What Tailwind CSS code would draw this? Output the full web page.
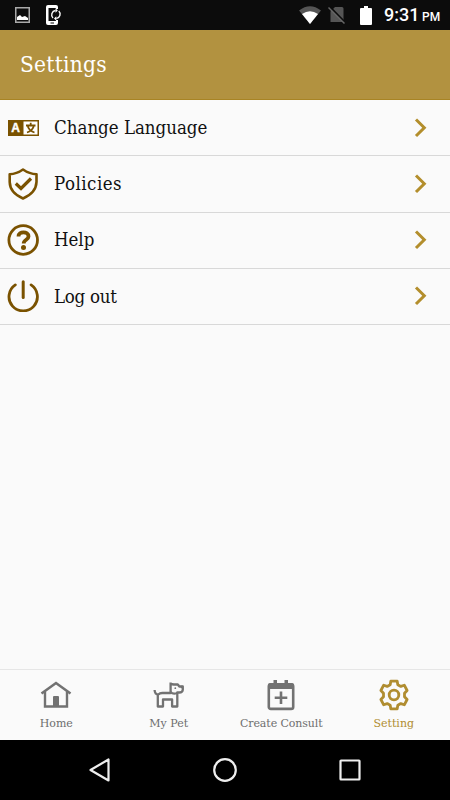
<!DOCTYPE html>
<html lang="en">
<head>
    <meta charset="UTF-8">
    <meta name="viewport" content="width=device-width, initial-scale=1.0">
    <title>Settings</title>
    <script src="https://cdn.jsdelivr.net/npm/@tailwindcss/browser@4"></script>
</head>
<body class="bg-black">
    <div class="flex flex-col w-[450px] h-[800px] overflow-hidden bg-[#fafafa] font-['Roboto_Slab','DejaVu_Serif',serif]">
        <!-- Status Bar -->
        <div class="h-[30px] shrink-0 bg-[#0c0c0c] text-white flex items-center justify-between pl-[15px] pr-[10px]">
            <div class="flex items-center gap-[15px]">
                <svg class="w-[15px] h-4" viewBox="0 0 15 16" fill="none">
                    <rect x="0.75" y="0.75" width="13.5" height="14.5" stroke="#aaa" stroke-width="1.5"/>
                    <path d="M2 13V10l3-2 2 2 3-1 3 2v2z" fill="#fff"/>
                </svg>
                <svg class="w-[18px] h-5" viewBox="0 0 18 20">
                    <path d="M3 0h8a2 2 0 0 1 2 2v2h-2V3H3.500v13H11v-1h2v3a2 2 0 0 1-2 2H3a2 2 0 0 1-2-2V2a2 2 0 0 1 2-2z" fill="#fff"/>
                    <path d="M5.500 18h3.500" stroke="#0c0c0c"/>
                    <path d="M8 13a4.400 4.400 0 0 1 2.500-7.500M13.800 6a4.400 4.400 0 0 1-2.500 7.500" fill="none" stroke="#fff" stroke-width="1.400"/>
                    <path d="M10.500 3.300v4.400l2.300-2.200zM11.300 11.300v4.400l-2.300-2.200z" fill="#fff"/>
                </svg>
            </div>
            <div class="flex items-center">
                <svg class="w-[22px] h-[18px]" viewBox="0 0 22 18">
                    <path d="M0 4.500Q11-4 22 4.500L11 18z" fill="#555"/>
                    <path d="M3 8Q11 2.500 19 8L11 18z" fill="#fff"/>
                </svg>
                <svg class="w-[18px] h-[18px] ml-[7px]" viewBox="0 0 18 18">
                    <path d="M7 1h7a1.500 1.500 0 0 1 1.500 1.500V16H2.500V5.500z" fill="#555"/>
                    <path d="M1.500 0.500L17.500 17" stroke="#0c0c0c" stroke-width="2"/>
                    <path d="M0.500 1.500L16.500 17.500" stroke="#666" stroke-width="1.500"/>
                </svg>
                <svg class="w-3 h-[19px] ml-[14px]" viewBox="0 0 12 19">
                    <path d="M4 0h4v2h3a1 1 0 0 1 1 1v15a1 1 0 0 1-1 1H1a1 1 0 0 1-1-1V3a1 1 0 0 1 1-1h3z" fill="#fff"/>
                </svg>
                <div class="ml-[12px] pt-[2px] flex items-baseline whitespace-nowrap font-medium font-[Roboto,sans-serif]">
                    <span class="text-[18px] leading-5 w-[34px]">9:31</span>
                    <span class="text-[12px] leading-5 ml-[4px] w-[18px]">PM</span>
                </div>
            </div>
        </div>

        <!-- Header -->
        <header class="h-[70px] shrink-0 bg-[#b29240] border-b border-[#a88424] flex items-center pl-[20px] pt-px">
            <h1 class="text-[22.5px] tracking-[0.25px] text-white [font-stretch:condensed] font-['Roboto_Slab','DejaVu_Serif_Condensed','DejaVu_Serif',serif]">Settings</h1>
        </header>

        <!-- Settings List -->
        <main class="flex-1 text-[18.5px] text-[#111] whitespace-nowrap [font-stretch:condensed] font-['Roboto_Slab','DejaVu_Serif_Condensed','DejaVu_Serif',serif]">
            <a class="h-[56.25px] border-b border-[#d8d8d8] flex items-center pl-[7px] pr-[22px]">
                <svg class="w-8 h-8" viewBox="0 0 32 32">
                    <rect x="1" y="8" width="31" height="16" fill="#7a5200"/>
                    <rect x="16.500" y="9.500" width="14" height="13" fill="#fff"/>
                    <text x="8.500" y="20.300" text-anchor="middle" class="font-['Liberation_Sans',sans-serif] font-bold text-[12px]" fill="#fff" stroke="#fff" stroke-width="0.400">A</text>
                    <path d="M19 13.500h9.500M23.700 10.800V13.500M20.800 14.500Q22.500 19 27.500 20.500M26.700 14.500Q25 19 20 20.500" fill="none" stroke="#7a5200" stroke-width="1.800"/>
                </svg>
                <span class="flex-1 ml-[15px]">Change Language</span>
                <svg class="w-[14px] h-5" viewBox="0 0 14 20" fill="none" stroke="#b38e2c" stroke-width="3"><path d="M2 1.500L10.300 9.700L2 18"/></svg>
            </a>
            <a class="h-[56.25px] border-b border-[#d8d8d8] flex items-center pl-[7px] pr-[22px]">
                <svg class="w-8 h-8" viewBox="0 0 32 32" fill="none" stroke="#7a5200">
                    <path d="M16 1.500Q22.500 6 29.500 6.300V14Q29 25 16 30.500Q3 25 2.700 14V6.300Q9.500 6 16 1.500z" stroke-width="2.600" stroke-linejoin="round"/>
                    <path d="M8.800 15.500L14 20.500L24 10.500" stroke-width="3.200"/>
                </svg>
                <span class="flex-1 ml-[15px] tracking-[0.5px]">Policies</span>
                <svg class="w-[14px] h-5" viewBox="0 0 14 20" fill="none" stroke="#b38e2c" stroke-width="3"><path d="M2 1.500L10.300 9.700L2 18"/></svg>
            </a>
            <a class="h-[56.25px] border-b border-[#d8d8d8] flex items-center pl-[7px] pr-[22px]">
                <svg class="w-8 h-8" viewBox="0 0 32 32" fill="none" stroke="#7a5200">
                    <circle cx="16.200" cy="16" r="14.300" stroke-width="2.800"/>
                    <path d="M11.500 12.500C11.500 7 21.500 7 21.500 12.500C21.500 16 16.700 15.500 16.700 19.500" stroke-width="3.800"/>
                    <circle cx="16.500" cy="23.500" r="2.500" fill="#7a5200" stroke="none"/>
                </svg>
                <span class="flex-1 ml-[15px]">Help</span>
                <svg class="w-[14px] h-5" viewBox="0 0 14 20" fill="none" stroke="#b38e2c" stroke-width="3"><path d="M2 1.500L10.300 9.700L2 18"/></svg>
            </a>
            <a class="h-[56.25px] border-b border-[#d8d8d8] flex items-center pl-[7px] pr-[22px]">
                <svg class="w-8 h-8" viewBox="0 0 32 32" fill="none" stroke="#7a5200" stroke-linecap="round">
                    <path d="M8.300 4.900A14.200 14.200 0 1 0 24.100 4.900" stroke-width="2.800"/>
                    <path d="M16.200 1.800V17.500" stroke-width="3"/>
                </svg>
                <span class="flex-1 ml-[15px] tracking-[-0.25px]">Log out</span>
                <svg class="w-[14px] h-5" viewBox="0 0 14 20" fill="none" stroke="#b38e2c" stroke-width="3"><path d="M2 1.500L10.300 9.700L2 18"/></svg>
            </a>
        </main>

        <!-- Bottom Tabs -->
        <nav class="h-[71px] shrink-0 border-t border-[#e6e6e6] grid grid-cols-4 text-[11px] text-[#6e6e6e]">
            <a class="flex flex-col items-center pt-[9px]">
                <svg class="w-8 h-8" viewBox="0 0 32 32" fill="none" stroke="#727272" stroke-width="2.400">
                    <path d="M1.500 14.500L16 4L30.500 14.500" stroke-width="2.600"/>
                    <path d="M5 12.500V27.500H27V12.500"/>
                    <path d="M13 27V18q0-1 1-1h4q1 0 1 1v9z" fill="#727272" stroke="none"/>
                </svg>
                <span class="mt-[5px] leading-4">Home</span>
            </a>
            <a class="flex flex-col items-center pt-[9px]">
                <svg class="w-8 h-8" viewBox="0.7 0 32 32" fill="none" stroke="#727272" stroke-width="2.300" stroke-linejoin="round">
                    <path d="M2.300 11Q2.500 15.500 6 15.500Q7.500 14 10 14H18.300V3.500M18.300 5L21.500 5.500H25.500L27 7.500H30.500V10.500Q30.500 13.500 27 13.500H25V27.500H19.800V20.500H10.700V27.500H5.500V15.500"/>
                    <path d="M18.300 13Q20.500 15.500 25 14"/>
                    <circle cx="23" cy="9.200" r="0.900" fill="#727272" stroke="none"/>
                    <path d="M28.500 8h2" stroke-width="2.500"/>
                </svg>
                <span class="mt-[5px] leading-4 whitespace-nowrap">My Pet</span>
            </a>
            <a class="flex flex-col items-center pt-[9px]">
                <svg class="w-8 h-8" viewBox="0 0 32 32" fill="none" stroke="#727272">
                    <rect x="3.800" y="5.500" width="24.400" height="24.400" rx="2" stroke-width="2.600"/>
                    <path d="M3 10V6q0-2 2-2h22q2 0 2 2v4zM8.500 1h3.500v4H8.500zM19.500 1H23v4h-3.500z" fill="#727272" stroke="none"/>
                    <path d="M16 12.500V25M9.700 18.700H22.300" stroke-width="2.600"/>
                </svg>
                <span class="mt-[5px] leading-4 whitespace-nowrap tracking-[-0.1px]">Create Consult</span>
            </a>
            <a class="flex flex-col items-center pt-[9px] text-[#b08d30]">
                <svg class="w-8 h-8" viewBox="0 0 32 32" fill="none" stroke="#b08d30" stroke-width="2.800" stroke-linejoin="round">
                    <path d="M12.800 2.200h6.400l0.600 3.600 3 1.600 3.500-1.200 2.800 5.300-2.600 2.800v3.400l2.600 2.800-2.800 5.300-3.500-1.200-3 1.600-0.600 3.600h-6.400l-0.600-3.600-3-1.600-3.500 1.200-2.800-5.300 2.600-2.800v-3.400l-2.600-2.800 2.800-5.300 3.500 1.200 3-1.600z"/>
                    <circle cx="16" cy="16" r="4.800" stroke-width="2.800"/>
                </svg>
                <span class="mt-[5px] leading-4">Setting</span>
            </a>
        </nav>

        <!-- System Navigation -->
        <div class="h-[60px] shrink-0 bg-black flex items-center justify-center gap-[101px]">
            <svg class="w-6 h-6" viewBox="0 0 24 24" fill="none" stroke="#eee" stroke-width="2.200" stroke-linejoin="round"><path d="M2.500 12L20.500 1.500V22.500z"/></svg>
            <svg class="w-6 h-6" viewBox="0 0 24 24" fill="none" stroke="#eee" stroke-width="2.200"><circle cx="12" cy="12" r="10.800"/></svg>
            <svg class="w-6 h-6" viewBox="0 0 24 24" fill="none" stroke="#eee" stroke-width="2.200"><rect x="2.500" y="2.500" width="19" height="19" rx="0.500"/></svg>
        </div>
    </div>
</body>
</html>
